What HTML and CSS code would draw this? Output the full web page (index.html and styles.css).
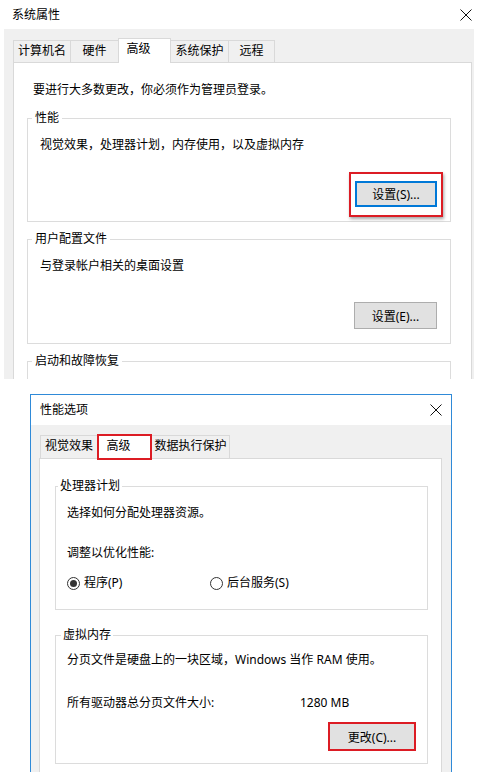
FILE: index.html
```html
<html>

<head>
    <meta charset="utf-8">
    <link rel="stylesheet" href="styles.css">
</head>

<body>
    <div class="win win1">
        <div class="titlebar">
            <span>系统属性</span>
            <svg class="close" width="12" height="12" viewBox="0 0 12 12"><path d="M0.5 0.5L11.5 11.5M11.5 0.5L0.5 11.5" stroke="#111" stroke-width="1" fill="none"/></svg>
        </div>
        <div class="frame">
            <div class="tabs">
                <div class="tab t-name">计算机名</div>
                <div class="tab t-hw">硬件</div>
                <div class="tab t-adv active">高级</div>
                <div class="tab t-prot">系统保护</div>
                <div class="tab t-remote">远程</div>
            </div>
            <div class="panel">
                <p class="note">要进行大多数更改，你必须作为管理员登录。</p>

                <fieldset class="group">
                    <legend>性能</legend>
                    <div class="desc">视觉效果，处理器计划，内存使用，以及虚拟内存</div>
                    <div class="btnrow">
                        <span class="mark"><button class="btn focus">设置(S)...</button></span>
                    </div>
                </fieldset>

                <fieldset class="group">
                    <legend>用户配置文件</legend>
                    <div class="desc">与登录帐户相关的桌面设置</div>
                    <div class="btnrow">
                        <button class="btn">设置(E)...</button>
                    </div>
                </fieldset>

                <fieldset class="group">
                    <legend>启动和故障恢复</legend>
                </fieldset>
            </div>
        </div>
    </div>

    <div class="win win2">
        <div class="titlebar">
            <span>性能选项</span>
            <svg class="close" width="12" height="12" viewBox="0 0 12 12"><path d="M0.5 0.5L11.5 11.5M11.5 0.5L0.5 11.5" stroke="#111" stroke-width="1" fill="none"/></svg>
        </div>
        <div class="frame">
            <div class="tabs">
                <div class="tab t-visual">视觉效果</div>
                <div class="tab t-adv2 active marked">高级</div>
                <div class="tab t-dep">数据执行保护</div>
            </div>
            <div class="panel">
                <fieldset class="group">
                    <legend>处理器计划</legend>
                    <div class="line first">选择如何分配处理器资源。</div>
                    <div class="line gap">调整以优化性能:</div>
                    <div class="radios">
                        <label class="radio"><span class="dot checked"></span>程序(P)</label>
                        <label class="radio"><span class="dot"></span>后台服务(S)</label>
                    </div>
                </fieldset>

                <fieldset class="group vm">
                    <legend>虚拟内存</legend>
                    <div class="line first">分页文件是硬盘上的一块区域，Windows 当作 RAM 使用。</div>
                    <div class="line size">
                        <span class="size-label">所有驱动器总分页文件大小:</span>
                        <span>1280 MB</span>
                    </div>
                    <div class="btnrow">
                        <button class="btn redbtn">更改(C)...</button>
                    </div>
                </fieldset>
            </div>
        </div>
    </div>
</body>

</html>
```

FILE: styles.css
```css
body {
    margin: 0;
    background-color: white;
    font-family: "Noto Sans", "Noto Sans CJK SC", sans-serif;
    font-size: 12px;
    color: #000;
    height: 772px;
    overflow: hidden;
}

.win {
    overflow: hidden;
}

.titlebar {
    display: flex;
    align-items: center;
    justify-content: space-between;
    line-height: 16px;
}

.close {
    display: block;
}

.tabs {
    display: flex;
    align-items: flex-end;
}

.tab {
    box-sizing: border-box;
    background-color: #f0f0f0;
    border: 1px solid #d9d9d9;
    border-bottom: none;
    margin-right: -1px;
    text-align: center;
    line-height: 20px;
}

.tab.active {
    background-color: white;
    position: relative;
    z-index: 1;
    padding-right: 12px;
}

.panel {
    background-color: white;
    border: 1px solid #d9d9d9;
}

.group {
    margin: 0;
    border: 1px solid #dcdcdc;
    min-width: 0;
}

legend {
    padding: 0 3px;
    line-height: 14px;
}

.desc,
.line {
    line-height: 16px;
}

.btnrow {
    display: flex;
    justify-content: flex-end;
}

.btn {
    box-sizing: border-box;
    font-family: "Noto Sans", "Noto Sans CJK SC", sans-serif;
    font-size: 12px;
    color: #000;
    background-color: #e1e1e1;
    border: 1px solid #adadad;
    width: 83px;
    height: 27px;
    padding: 0;
}

.btn.focus {
    border: 2px solid #0078d7;
    height: 26px;
    width: 82px;
}

.mark {
    display: inline-block;
    border: 2px solid #dc1c24;
    padding: 7px 4px 8px 4px;
    margin: -9px -6px -10px -6px;
    box-shadow: 1px 2px 3px rgba(0, 0, 0, 0.35);
}

/* system properties */

.win1 {
    height: 379px;
}

.win1 .titlebar {
    height: 29px;
    padding: 0 8px 0 12px;
}

.win1 .frame {
    margin: 0 6px 0 4px;
    height: 350px;
    background-color: #f0f0f0;
    padding: 9px 2px 0 9px;
}

.win1 .tabs {
    height: 24px;
}

.win1 .tab {
    height: 22px;
}

.win1 .tab.active {
    height: 25px;
    margin-bottom: -1px;
    line-height: 20px;
}

.t-name { width: 58px; }
.t-hw { width: 49px; }
.t-adv { width: 53px; }
.t-prot { width: 59px; }
.t-remote { width: 47px; }

.win1 .panel {
    height: 340px;
    padding: 19px 20px 0 13px;
}

.note {
    margin: 0 0 13px 6px;
    line-height: 16px;
}

.win1 .group {
    padding: 0 13px 14px 4px;
    margin-bottom: 10px;
}

.win1 .desc {
    margin: 12px 0 0 8px;
}

.win1 .btnrow {
    margin-top: 28px;
}

/* performance options */

.win2 {
    margin: 15px 0 0 30px;
    width: 422px;
    height: 378px;
    box-sizing: border-box;
    border: 1px solid #2f8ad8;
    border-bottom: none;
}

.win2 .titlebar {
    height: 30px;
    padding: 0 9px 0 9px;
}

.win2 .frame {
    height: 347px;
    background-color: #f0f0f0;
    padding: 9px 9px 0 8px;
}

.win2 .tabs {
    height: 24px;
    padding-left: 1px;
}

.win2 .tab {
    height: 23px;
}

.win2 .tab.marked {
    height: 26px;
    margin-bottom: -2px;
    border: 2px solid #dc1c24;
    line-height: 20px;
}

.t-visual { width: 58px; }
.t-adv2 { width: 55px; }
.t-dep { width: 79px; }

.win2 .panel {
    height: 340px;
    padding: 20px 13px 0 15px;
}

.win2 .group {
    padding: 0 11px 18px 11px;
}

.win2 legend {
    margin-left: -9px;
    padding: 0 2px;
}

.win2 .line.first {
    margin-top: 12px;
}

.win2 .line.gap {
    margin-top: 24px;
}

.radios {
    display: grid;
    grid-template-columns: 143px auto;
    margin-top: 14px;
    line-height: 16px;
}

.radio {
    display: flex;
    align-items: center;
    gap: 4px;
}

.dot {
    box-sizing: border-box;
    width: 13px;
    height: 13px;
    border: 1px solid #333;
    border-radius: 50%;
    display: flex;
    align-items: center;
    justify-content: center;
}

.dot.checked::after {
    content: "";
    width: 7px;
    height: 7px;
    border-radius: 50%;
    background-color: #333;
}

.win2 .group.vm {
    margin-top: 18px;
    padding-bottom: 12px;
}

.win2 .vm legend {
    margin-left: -6px;
}

.win2 .vm .line.first {
    margin-top: 10px;
}

.line.size {
    display: grid;
    grid-template-columns: 233px auto;
    margin-top: 27px;
}

.win2 .btnrow {
    margin-top: 11px;
}

.btn.redbtn {
    border: 2px solid #dc1c24;
    width: 88px;
    height: 29px;
}
```
